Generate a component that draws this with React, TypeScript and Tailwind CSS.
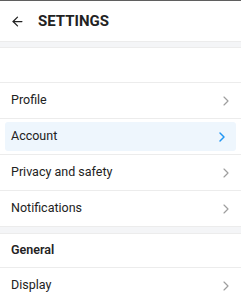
import { ArrowLeft, ChevronRight } from 'lucide-react'

interface Item {
  label: string
  active?: boolean
}

const accountItems: Item[] = [
  { label: 'Profile' },
  { label: 'Account', active: true },
  { label: 'Privacy and safety' },
  { label: 'Notifications' },
]

function Row({ item }: { item: Item }) {
  if (item.active) {
    return (
      <div className="h-[36px] border-b border-[#ececec] px-[5px] py-[3px]">
        <div className="flex h-full items-center justify-between rounded-[3px] bg-[#eef6fd] pl-[6px] pr-[6px]">
          <span className="text-[12.5px] text-[#222]">{item.label}</span>
          <ChevronRight className="h-[16px] w-[16px] text-[#2196f3]" strokeWidth={2.2} />
        </div>
      </div>
    )
  }
  return (
    <div className="flex h-[36px] items-center justify-between border-b border-[#ececec] pl-[11px] pr-[7px]">
      <span className="text-[12.5px] text-[#222]">{item.label}</span>
      <ChevronRight className="h-[16px] w-[16px] text-[#9e9e9e]" strokeWidth={1.75} />
    </div>
  )
}

export default function App() {
  return (
    <div className="h-[300px] w-[241px] overflow-hidden bg-white font-['Roboto',sans-serif]">
      <div className="h-px bg-[#5f5f5f]" />
      <div className="flex h-[40px] items-center gap-[13px] pl-[10px]">
        <ArrowLeft className="h-[15px] w-[15px] text-[#222]" strokeWidth={2} />
        <span className="text-[15px] font-bold text-[#222]">SETTINGS</span>
      </div>
      <div className="h-[7px] border-y border-[#ececec] bg-[#f4f5f7]" />
      <div className="h-[35px] border-b border-[#ececec]" />
      {accountItems.map((item) => (
        <Row key={item.label} item={item} />
      ))}
      <div className="h-[7px] border-b border-[#ececec] bg-[#f4f5f7]" />
      <div className="flex h-[34px] items-center border-b border-[#ececec] pl-[11px]">
        <span className="text-[12.5px] font-semibold text-[#222]">General</span>
      </div>
      <Row item={{ label: 'Display' }} />
    </div>
  )
}
